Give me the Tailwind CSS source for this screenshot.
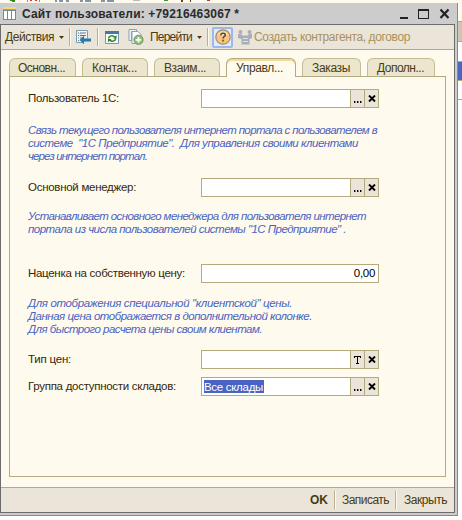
<!DOCTYPE html>
<html lang="ru">
<head>
<meta charset="utf-8">
<title>Сайт пользователи</title>
<script src="https://cdn.jsdelivr.net/npm/@tailwindcss/browser@4"></script>
</head>
<body class="relative h-[520px] w-[462px] overflow-hidden bg-white font-['Liberation_Sans',sans-serif] text-[12px] text-[#4a3a10] whitespace-nowrap">
<!-- parent window, visible along the edges -->
<div class="absolute inset-0 flex flex-col">
<svg class="block h-[3px] w-full shrink-0 bg-[#fffaee]" viewBox="0 0 462 3" shape-rendering="crispEdges"><path d="M10 0h5v1h-5zM12 1h3v1h-3z" fill="#2f8a1c"/><path d="M27 0h1v2h-1zM39 0h1v2h-1z" fill="#8b90a0"/><path d="M30 0h2v1h-2zM35 0h2v1h-2z" fill="#d33"/><path d="M55 0h2v2h-2zM59 0h4v2h-4zM66 0h3v2h-3zM80 0h3v2h-3zM85 0h6v2h-6zM101 0h4v2h-4zM107 0h7v2h-7z" fill="#8393a8"/><path d="M133 0h7v1h-7z" fill="#bbb"/><path d="M164 0h4v1h-4z" fill="#3c9a2c"/><path d="M181 0h2v2h-2zM190 0h1v2h-1z" fill="#5a4520"/><path d="M207 0h3v1h-3z" fill="#b33"/></svg>
<div class="flex-1 pl-[458px]">
<div class="h-[18px] bg-[#fffaee]"></div>
<div class="h-[21px] border-y border-[#b3aa7d] bg-[#cbc7b0]"></div>
<div class="h-[20px] border-b border-[#b3aa7d]"></div>
<div class="h-[19px] border-b border-[#b3aa7d] bg-[#4d66c4]"></div>
<div class="h-[19px] border-b border-[#b3aa7d]"></div>
</div>
</div>

<!-- dialog -->
<div class="absolute left-0 top-[3px] flex h-[513px] w-[458px] flex-col border-r border-b border-[#8a8a8a] bg-[#cccccc] pr-[2px] pb-[2px]">
<div class="flex h-[21px] shrink-0 items-center text-[#2a2a2a]">
<svg class="ml-[3px] h-[13px] w-[13px]" viewBox="0 0 13 13" shape-rendering="crispEdges"><path fill="#7488a0" d="M0 0h13v13H0z"/><path fill="#ffd866" d="M0 0h13v3H0z"/><path fill="#c89c3c" d="M0 2h13v1H0z"/><path fill="#fff" d="M1 4h3v8H1zM5 4h3v8H5zM9 4h3v8H9z"/></svg>
<span class="ml-[6px] pt-px text-[12px] font-bold tracking-[0.17px]">Сайт пользователи: +79216463067 *</span>
<svg class="ml-auto mr-[3px] h-[12px] w-[52px]" viewBox="0 0 52 12" fill="#222"><path d="M0 9h8v2H0z"/><path d="M18 1h11v10H18zM19 3v7h9V3z" fill-rule="evenodd"/><path d="M40.500 1.500 48.500 10M48.500 1.500 40.500 10" stroke="#222" stroke-width="2.200"/></svg>
</div>
<div class="flex flex-1 flex-col border border-[#6c6c6c] bg-[#fffaee]">
<!-- toolbar -->
<div class="flex h-[25px] shrink-0 items-center border-b border-[#b3aa7d] bg-[#ebe4d9]">
<span class="ml-[4px] w-[49px] tracking-[-0.45px]">Действия</span>
<svg class="ml-[5px] h-[3px] w-[5px]" viewBox="0 0 5 3"><path d="M0 0h5L2.500 3z" fill="#4a3a10"/></svg>
<div class="ml-[5px] h-[18px] w-[2px] border-l border-[#b9b18c] bg-[#fffaee]"></div>
<svg class="ml-[4px] h-[16px] w-[17px]" viewBox="0 0 17 16"><path d="M1.500 1.500h11v8M8 13.500H1.500v-12" fill="#f5fafd" stroke="#7a9bb5"/><path d="M3 4h1M5 4h6M3 6.500h1M5 6.500h6M3 9h1M5 9h3M3 11.500h1" stroke="#527795"/><path d="M4.500 11 9 6.800V9.500h7v3H9v2.700z" fill="#2879ad"/></svg>
<div class="ml-[5px] h-[18px] w-[2px] border-l border-[#b9b18c] bg-[#fffaee]"></div>
<svg class="ml-[6px] h-[15px] w-[15px]" viewBox="0 0 15 15"><path d="M.5 1.500h13v12H.5z" fill="#fbfdfd" stroke="#7895aa"/><path d="M0 1h14v3H0z" fill="#46799b"/><path d="M3.500 8.500C4 5.500 8 5 9.500 7M10.800 8.500C10 11.500 6.500 12 5 10" fill="none" stroke="#278326" stroke-width="1.500"/><path d="M8 8.500h3.500V5zM6.500 9H3v3.500z" fill="#278326"/></svg>
<svg class="ml-[8px] h-[16px] w-[16px]" viewBox="0 0 16 16"><path d="M1 .5h7.500v2H3.500v9H1z" fill="#edf4f8" stroke="#8ba2b3"/><path d="M4 2.500h6l3 3v9H4z" fill="#fafdff" stroke="#8ba2b3"/><circle cx="10.500" cy="10.800" r="4.600" fill="#8fbd79" stroke="#6c9d5c"/><path d="M10.500 8v5.600M7.700 10.800h5.600" stroke="#fff" stroke-width="1.800"/></svg>
<span class="ml-[6px] w-[42px] tracking-[-0.79px]">Перейти</span>
<svg class="ml-[5px] h-[3px] w-[5px]" viewBox="0 0 5 3"><path d="M0 0h5L2.500 3z" fill="#4a3a10"/></svg>
<div class="ml-[5px] h-[18px] w-[2px] border-l border-[#b9b18c] bg-[#fffaee]"></div>
<div class="ml-[3px] flex h-[21px] w-[21px] items-center justify-center rounded-[2px] border-2 border-[#9cb9ec] bg-[#e4ebf8]">
<svg class="h-[16px] w-[16px] shrink-0" viewBox="0 0 16 16"><circle cx="8" cy="8" r="7.200" fill="#fbc47c" stroke="#a08c78" stroke-width="1.200"/><path d="M3 6a5.300 5.300 0 0 1 10 0" fill="#fde4ba"/><path d="M5.700 6.300C5.700 3.300 10.300 3.500 10.300 6 10.300 7.600 8 7.500 8 9.500M8 10.800v1.600" fill="none" stroke="#4a3a2a" stroke-width="1.400"/></svg>
</div>
<svg class="ml-[5px] h-[16px] w-[14px]" viewBox="0 0 14 16" fill="#a9afb9"><circle cx="2.500" cy="3" r="2"/><circle cx="11.500" cy="3" r="2"/><path d="M0 5h3l1.500 1.500h5L11 5h3v4l-2.500 1v5.500h-8V10L0 9z"/><path d="M5 9.500h5M5 12.500h5" stroke="#dfe1e2"/></svg>
<span class="ml-[2px] tracking-[-0.38px] text-[#a8925c]">Создать контрагента, договор</span>
</div>
<!-- tabs -->
<div class="relative mt-[8px] flex h-[19px] shrink-0 pl-[8px] *:h-[18px] *:rounded-t-[6px] *:border *:border-b-0 *:border-[#c3bc95] *:bg-[#ebe6cd] *:pl-[9px] *:leading-[18px]">
<div class="w-[67px] pl-[8px]! tracking-[-0.51px]">Основн...</div>
<div class="ml-[6px] w-[66px] tracking-[-0.29px]">Контак...</div>
<div class="ml-[6px] w-[66px] tracking-[-0.39px]">Взаим...</div>
<div class="z-10 ml-[6px] h-[19px]! w-[70px] border-[#b3aa7d]! bg-[#fffaee]! shadow-[inset_0_2px_0_#f5d999] tracking-[-0.34px]">Управл...</div>
<div class="ml-[6px] w-[59px] tracking-[-0.35px]">Заказы</div>
<div class="ml-[6px] w-[68px] tracking-[-0.5px]">Дополн...</div>
</div>
<!-- page -->
<div class="-mt-px ml-[8px] h-[401px] w-[437px] shrink-0 border border-[#b3aa7d] pl-[18px] pt-[12px] text-[11.5px] text-[#33270c]">
<div class="flex h-[19px] items-center"><span class="w-[173px] tracking-[-0.295px]">Пользователь 1С:</span>
<div class="flex h-full w-[178px] border border-[#b3aa7d] bg-white"><div class="flex-1"></div><div class="flex w-[14px] items-end justify-center border-l border-[#b3aa7d] bg-[#ebe4d9] pb-[4px]"><svg class="h-[2px] w-[8px]" viewBox="0 0 8 2"><path d="M0 0h1.400v2H0zM3 0h1.400v2H3zM6 0h1.400v2H6z"/></svg></div><div class="flex w-[14px] items-center justify-center border-l border-[#b3aa7d] bg-[#ebe4d9]"><svg class="h-[7px] w-[8px]" viewBox="0 0 8 7"><path d="M1 .5 7 6.500M7 .5 1 6.500" stroke="#000" stroke-width="1.900"/></svg></div></div></div>
<div class="mt-[16px] text-[11.5px] leading-[13px] italic text-[#4a63c0] *:whitespace-pre"><p class="tracking-[-0.628px]">Связь текущего пользователя интернет портала с пользователем в</p><p class="tracking-[-0.464px]">системе  "1С Предприятие".  Для управления своими клиентами</p><p class="tracking-[-0.89px]">через интернет портал.</p></div>
<div class="mt-[15px] flex h-[19px] items-center"><span class="w-[173px] tracking-[-0.28px]">Основной менеджер:</span>
<div class="flex h-full w-[178px] border border-[#b3aa7d] bg-white"><div class="flex-1"></div><div class="flex w-[14px] items-end justify-center border-l border-[#b3aa7d] bg-[#ebe4d9] pb-[4px]"><svg class="h-[2px] w-[8px]" viewBox="0 0 8 2"><path d="M0 0h1.400v2H0zM3 0h1.400v2H3zM6 0h1.400v2H6z"/></svg></div><div class="flex w-[14px] items-center justify-center border-l border-[#b3aa7d] bg-[#ebe4d9]"><svg class="h-[7px] w-[8px]" viewBox="0 0 8 7"><path d="M1 .5 7 6.500M7 .5 1 6.500" stroke="#000" stroke-width="1.900"/></svg></div></div></div>
<div class="mt-[13px] text-[11.5px] leading-[13px] italic text-[#4a63c0]"><p class="tracking-[-0.593px]">Устанавливает основного менеджера для пользователя интернет</p><p class="tracking-[-0.519px]">портала из числа пользователей системы "1С Предприятие" .</p></div>
<div class="mt-[28px] flex h-[19px] items-center"><span class="w-[173px] tracking-[-0.297px]">Наценка на собственную цену:</span>
<div class="flex h-full w-[178px] items-center justify-end border border-[#b3aa7d] bg-white pr-[3px] tracking-[-0.3px] text-black">0,00</div></div>
<div class="mt-[14px] text-[11.5px] leading-[13px] italic text-[#4a63c0]"><p class="tracking-[-0.37px]">Для отображения специальной "клиентской" цены.</p><p class="tracking-[-0.487px]">Данная цена отображается в дополнительной колонке.</p><p class="tracking-[-0.53px]">Для быстрого расчета цены своим клиентам.</p></div>
<div class="mt-[14px] flex h-[19px] items-center"><span class="w-[173px] tracking-[-0.22px]">Тип цен:</span>
<div class="flex h-full w-[178px] border border-[#b3aa7d] bg-white"><div class="flex-1"></div><div class="flex w-[14px] items-center justify-center border-l border-[#b3aa7d] bg-[#ebe4d9]"><svg class="h-[8px] w-[7px]" viewBox="0 0 7 8" shape-rendering="crispEdges"><path d="M0 0h7v2H6V1H4v6h1v1H2V7h1V1H1v1H0z"/></svg></div><div class="flex w-[14px] items-center justify-center border-l border-[#b3aa7d] bg-[#ebe4d9]"><svg class="h-[7px] w-[8px]" viewBox="0 0 8 7"><path d="M1 .5 7 6.500M7 .5 1 6.500" stroke="#000" stroke-width="1.900"/></svg></div></div></div>
<div class="mt-[8px] flex h-[19px] items-center"><span class="w-[173px] tracking-[-0.287px]">Группа доступности складов:</span>
<div class="flex h-full w-[178px] border border-[#b3aa7d] bg-white"><div class="flex flex-1 items-center pl-[2px]"><span class="h-[13px] w-[60px] bg-[#4a63c0] leading-[14px] tracking-[-0.3px] text-white">Все склады</span></div><div class="flex w-[14px] items-end justify-center border-l border-[#b3aa7d] bg-[#ebe4d9] pb-[4px]"><svg class="h-[2px] w-[8px]" viewBox="0 0 8 2"><path d="M0 0h1.400v2H0zM3 0h1.400v2H3zM6 0h1.400v2H6z"/></svg></div><div class="flex w-[14px] items-center justify-center border-l border-[#b3aa7d] bg-[#ebe4d9]"><svg class="h-[7px] w-[8px]" viewBox="0 0 8 7"><path d="M1 .5 7 6.500M7 .5 1 6.500" stroke="#000" stroke-width="1.900"/></svg></div></div></div>
</div>
<!-- footer -->
<div class="mt-auto flex h-[25px] shrink-0 items-center justify-end border-t border-[#b3aa7d] bg-[#ebe4d9] pr-[7px]">
<span class="font-bold">OK</span>
<div class="ml-[6px] h-[18px] w-[2px] border-l border-[#b9b18c] bg-[#fffaee]"></div>
<span class="ml-[6px] w-[47px] tracking-[-0.53px]">Записать</span>
<div class="ml-[6px] h-[18px] w-[2px] border-l border-[#b9b18c] bg-[#fffaee]"></div>
<span class="ml-[7px] w-[43px] tracking-[-0.46px]">Закрыть</span>
</div>
</div>
</div>
</body>
</html>
